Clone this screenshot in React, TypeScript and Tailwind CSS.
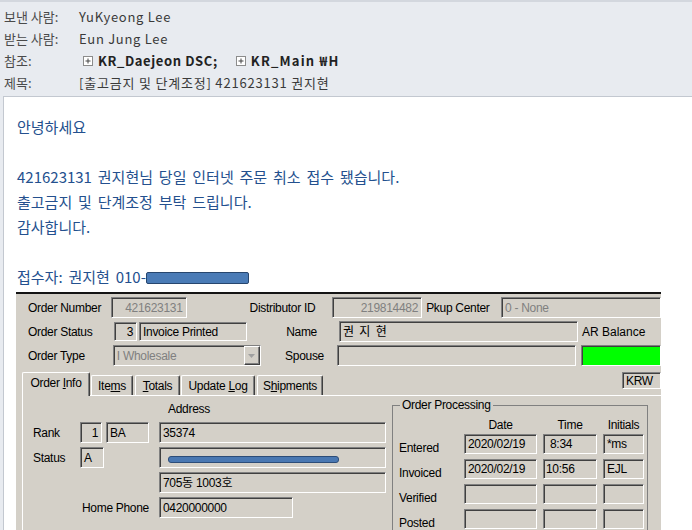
import React from "react";

type Kids = { className?: string; children?: React.ReactNode };

// sunken win-classic field
function Field({ className = "", children }: Kids) {
  return (
    <div
      className={`flex items-center shrink-0 border border-t-[#808080] border-l-[#808080] border-b-white border-r-white shadow-[inset_1px_1px_0_#404040] px-[3px] overflow-hidden whitespace-nowrap ${className}`}
    >
      {children}
    </div>
  );
}

function DropBtn() {
  return (
    <div className="ml-auto h-full w-[16px] shrink-0 flex items-center justify-center bg-[#d4d0c8] border border-t-white border-l-white border-b-[#404040] border-r-[#404040] shadow-[inset_-1px_-1px_0_#808080]">
      <svg width="7" height="4" viewBox="0 0 7 4">
        <path d="M0 0h7L3.5 4z" fill="#a0a0a0" />
      </svg>
    </div>
  );
}

function PlusBox({ className = "" }: { className?: string }) {
  return (
    <svg width="10" height="10" viewBox="0 0 10 10" className={`shrink-0 ${className}`}>
      <rect x="0.5" y="0.5" width="9" height="9" fill="#fff" stroke="#8c8c8c" />
      <path d="M2.5 5h5M5 2.5v5" stroke="#444" strokeWidth="1" />
    </svg>
  );
}

function Tab({ label, active = false, w }: { label: React.ReactNode; active?: boolean; w: string }) {
  return (
    <div
      className={`${w} shrink-0 flex items-center justify-center bg-[#d4d0c8] border-t border-l border-white border-r border-r-[#404040] shadow-[inset_-1px_0_0_#808080] rounded-t-[2px] ${
        active ? "relative z-10 h-[24px] -mb-px pb-[3px]" : "h-[20px]"
      }`}
    >
      {label}
    </div>
  );
}

export default function App() {
  return (
    <div className="w-[692px] h-[530px] overflow-hidden bg-[#e8ebf0] font-['Noto_Sans_CJK_KR',sans-serif]">
      {/* mail header */}
      <div className="h-[96px] border-t-2 border-[#d3d7de] pt-[4px] pl-[4px] text-[13px] text-[#3a3a3a]">
        <div className="flex items-center h-[22px]">
          <span className="w-[75px] text-[#4a4a4a]">보낸 사람:</span>
          <span className="tracking-[0.7px]">YuKyeong Lee</span>
        </div>
        <div className="flex items-center h-[22px]">
          <span className="w-[75px] text-[#4a4a4a]">받는 사람:</span>
          <span className="tracking-[0.7px]">Eun Jung Lee</span>
        </div>
        <div className="flex items-center h-[22px]">
          <span className="w-[75px] text-[#4a4a4a]">참조:</span>
          <PlusBox className="ml-[4px]" />
          <b className="ml-[5px] text-[#222] tracking-[0.6px]">KR_Daejeon DSC;</b>
          <PlusBox className="ml-[18px]" />
          <b className="ml-[5px] text-[#222] tracking-[1.2px]">KR_Main ₩H</b>
        </div>
        <div className="flex items-center h-[22px]">
          <span className="w-[75px] text-[#4a4a4a]">제목:</span>
          <span className="tracking-[0.8px]">[출고금지 및 단계조정] 421623131 권지현</span>
        </div>
      </div>

      {/* mail body */}
      <div className="ml-[3px] h-[434px] border-l border-t border-[#c3c8d0] bg-white overflow-hidden">
        <div className="pt-[17px] pl-[13px] text-[15px] leading-[25px] text-[#24508e] [word-spacing:2.5px]">
          <p>안녕하세요</p>
          <p className="h-[25px]" />
          <p>421623131 권지현님 당일 인터넷 주문 취소 접수 됐습니다.</p>
          <p>출고금지 및 단계조정 부탁 드립니다.</p>
          <p>감사합니다.</p>
          <p className="h-[25px]" />
          <p className="flex items-center">
            접수자: 권지현 010-
            <span className="inline-block w-[103px] h-[12px] mt-[2px] rounded-[2px] bg-[#4a7bb6] border border-[#27466e]" />
          </p>
        </div>

        {/* pasted screenshot of the order screen */}
        <div className="ml-[12px] mt-[3px] w-[645px] h-[240px] overflow-hidden bg-[#d4d0c8] border-t-2 border-[#141414] pt-[3px] text-black font-['Liberation_Sans','Noto_Sans_CJK_KR',Arial,sans-serif] text-[12px] tracking-[-0.3px]">
          <div className="flex items-center h-[21px]">
            <span className="w-[98px] pl-[12px]">Order Number</span>
            <Field className="w-[76px] h-full justify-end text-[#808080]">421623131</Field>
            <span className="w-[149px] pl-[63px]">Distributor ID</span>
            <Field className="w-[90px] h-full justify-end text-[#808080]">219814482</Field>
            <span className="w-[82px] pl-[4px]">Pkup Center</span>
            <Field className="w-[160px] h-full pr-0 text-[#808080]">
              0 - None
              <span className="w-[134px] shrink-0" />
              <DropBtn />
            </Field>
          </div>

          <div className="flex items-center h-[21px] mt-[3px]">
            <span className="w-[98px] pl-[12px]">Order Status</span>
            <Field className="w-[23px] h-[19px] justify-end">3</Field>
            <Field className="w-[108px] h-[19px] ml-[2px]">Invoice Printed</Field>
            <span className="w-[92px] text-right pr-[22px]">Name</span>
            <Field className="w-[239px] h-full tracking-[1px]">권 지 현</Field>
            <span className="ml-[4px] whitespace-nowrap tracking-[0px]">AR Balance</span>
          </div>

          <div className="flex items-center h-[21px] mt-[3px]">
            <span className="w-[98px] pl-[12px]">Order Type</span>
            <Field className="w-[148px] h-full pr-0 text-[#808080]">
              I Wholesale
              <DropBtn />
            </Field>
            <span className="w-[77px] text-right pr-[13px]">Spouse</span>
            <Field className="w-[239px] h-full" />
            <Field className="w-[80px] h-full ml-[5px] bg-[#00ff00]" />
          </div>

          <div className="flex items-end h-[23px] mt-[6px] ml-[6px]">
            <Tab
              w="w-[68px]"
              active
              label={
                <span>
                  Order <u>I</u>nfo
                </span>
              }
            />
            <div className="ml-px" />
            <Tab
              w="w-[42px]"
              label={
                <span>
                  Ite<u>m</u>s
                </span>
              }
            />
            <div className="ml-[2px]" />
            <Tab
              w="w-[45px]"
              label={
                <span>
                  <u>T</u>otals
                </span>
              }
            />
            <div className="ml-px" />
            <Tab
              w="w-[74px]"
              label={
                <span>
                  Update <u>L</u>og
                </span>
              }
            />
            <div className="ml-[2px]" />
            <Tab
              w="w-[66px]"
              label={
                <span>
                  S<u>h</u>ipments
                </span>
              }
            />
            <Field className="self-start ml-auto w-[39px] h-[17px] px-[2px]">KRW</Field>
          </div>

          <div className="ml-[6px] h-[140px] border-l border-t border-white flex">
            {/* left column */}
            <div className="w-[363px] pt-[6px] shrink-0">
              <div className="h-[14px] leading-[14px] pl-[145px]">Address</div>
              <div className="mt-[6px] flex flex-col gap-[4px]">
                <div className="flex items-center h-[21px]">
                  <span className="w-[57px] pl-[10px]">Rank</span>
                  <Field className="w-[22px] h-full justify-end">1</Field>
                  <Field className="w-[43px] h-full ml-[4px]">BA</Field>
                  <Field className="w-[227px] h-full ml-[10px]">35374</Field>
                </div>
                <div className="flex items-center h-[21px]">
                  <span className="w-[57px] pl-[10px]">Status</span>
                  <Field className="w-[24px] h-full">A</Field>
                  <Field className="w-[227px] h-full ml-[55px] relative">
                    <span className="absolute left-[8px] top-[8px] w-[171px] h-[7px] rounded-[3px] bg-[#4a78b2] border border-[#2d4d78]" />
                  </Field>
                </div>
                <div className="flex items-center h-[21px]">
                  <Field className="w-[227px] h-full ml-[136px]">705동 1003호</Field>
                </div>
                <div className="flex items-center h-[21px]">
                  <span className="w-[136px] text-right pr-[10px]">Home Phone</span>
                  <Field className="w-[134px] h-full">0420000000</Field>
                </div>
              </div>
            </div>

            {/* order processing group */}
            <fieldset className="ml-[6px] mt-[2px] w-[256px] h-[160px] shrink-0 border border-[#808080]">
              <legend className="ml-[7px] px-[2px] leading-[14px]">Order Processing</legend>
              <div className="flex items-center h-[14px] mt-[6px]">
                <span className="w-[71px]" />
                <span className="w-[73px] text-center">Date</span>
                <span className="w-[54px] ml-[6px] text-center">Time</span>
                <span className="w-[41px] ml-[6px] text-center">Initials</span>
              </div>
              <div className="mt-[2px] flex flex-col gap-[5px] pl-[6px]">
                {[
                  ["Entered", "2020/02/19", "8:34", "*ms"],
                  ["Invoiced", "2020/02/19", "10:56", "EJL"],
                  ["Verified", "", "", ""],
                  ["Posted", "", "", ""],
                ].map(([label, date, time, who]) => (
                  <div key={label} className="flex items-center h-[20px]">
                    <span className="w-[65px] mt-[8px]">{label}</span>
                    <Field className="w-[73px] h-full px-[2px]">{date}</Field>
                    <Field className={`w-[54px] h-full ml-[6px] ${time === "8:34" ? "pl-[6px]" : "pl-[2px]"}`}>
                      {time}
                    </Field>
                    <Field className="w-[41px] h-full ml-[6px] px-[2px]">{who}</Field>
                  </div>
                ))}
              </div>
            </fieldset>
          </div>
        </div>
      </div>
    </div>
  );
}
